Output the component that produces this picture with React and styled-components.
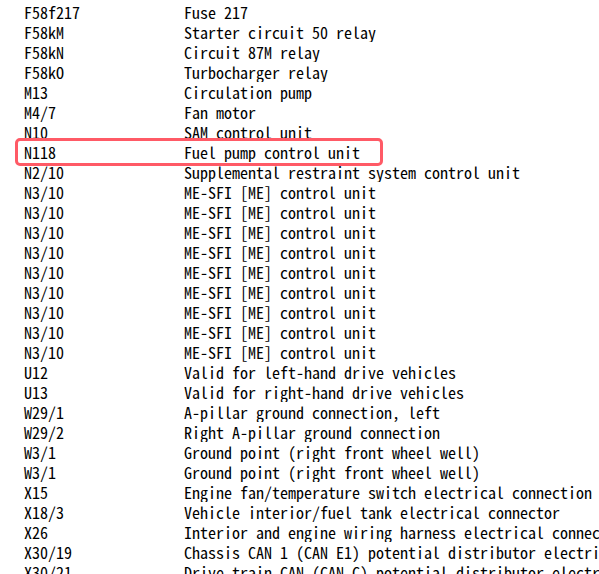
import React from "react";
import styled, { createGlobalStyle } from "styled-components";

const Global = createGlobalStyle`
  html, body { margin: 0; padding: 0; background: #fff; }
  body { overflow: hidden; }
`;

const List = styled.div`
  width: 599px;
  height: 574px;
  overflow: hidden;
  padding-top: 2px;
  box-sizing: border-box;
  font-family: "Noto Sans Mono CJK JP", "DejaVu Sans Mono", monospace;
  font-size: 16px;
  color: #000;
`;

const Row = styled.div`
  position: relative;
  display: grid;
  grid-template-columns: 160px 1fr;
  padding-left: 24px;
  height: 20px;
  line-height: 20px;
  white-space: nowrap;
  ${(p) =>
    p.$marked &&
    `
    &::after {
      content: "";
      position: absolute;
      left: 15px;
      top: -4px;
      width: 368px;
      height: 28px;
      box-sizing: border-box;
      border: 3px solid #ff5a66;
      border-radius: 5px;
    }
  `}
`;

const Code = styled.span``;
const Desc = styled.span`
  overflow: hidden;
`;

const rows = [
  ["F58f217", "Fuse 217"],
  ["F58kM", "Starter circuit 50 relay"],
  ["F58kN", "Circuit 87M relay"],
  ["F58kO", "Turbocharger relay"],
  ["M13", "Circulation pump"],
  ["M4/7", "Fan motor"],
  ["N10", "SAM control unit"],
  ["N118", "Fuel pump control unit", true],
  ["N2/10", "Supplemental restraint system control unit"],
  ...Array.from({ length: 9 }, () => ["N3/10", "ME-SFI [ME] control unit"]),
  ["U12", "Valid for left-hand drive vehicles"],
  ["U13", "Valid for right-hand drive vehicles"],
  ["W29/1", "A-pillar ground connection, left"],
  ["W29/2", "Right A-pillar ground connection"],
  ["W3/1", "Ground point (right front wheel well)"],
  ["W3/1", "Ground point (right front wheel well)"],
  ["X15", "Engine fan/temperature switch electrical connection"],
  ["X18/3", "Vehicle interior/fuel tank electrical connector"],
  ["X26", "Interior and engine wiring harness electrical connector"],
  ["X30/19", "Chassis CAN 1 (CAN E1) potential distributor electrical connector"],
  ["X30/21", "Drive train CAN (CAN C) potential distributor electrical connector"],
];

export default function App() {
  return (
    <>
      <Global />
      <List>
        {rows.map(([c, d, m], i) => (
          <Row key={i} $marked={m}>
            <Code>{c}</Code>
            <Desc>{d}</Desc>
          </Row>
        ))}
      </List>
    </>
  );
}
